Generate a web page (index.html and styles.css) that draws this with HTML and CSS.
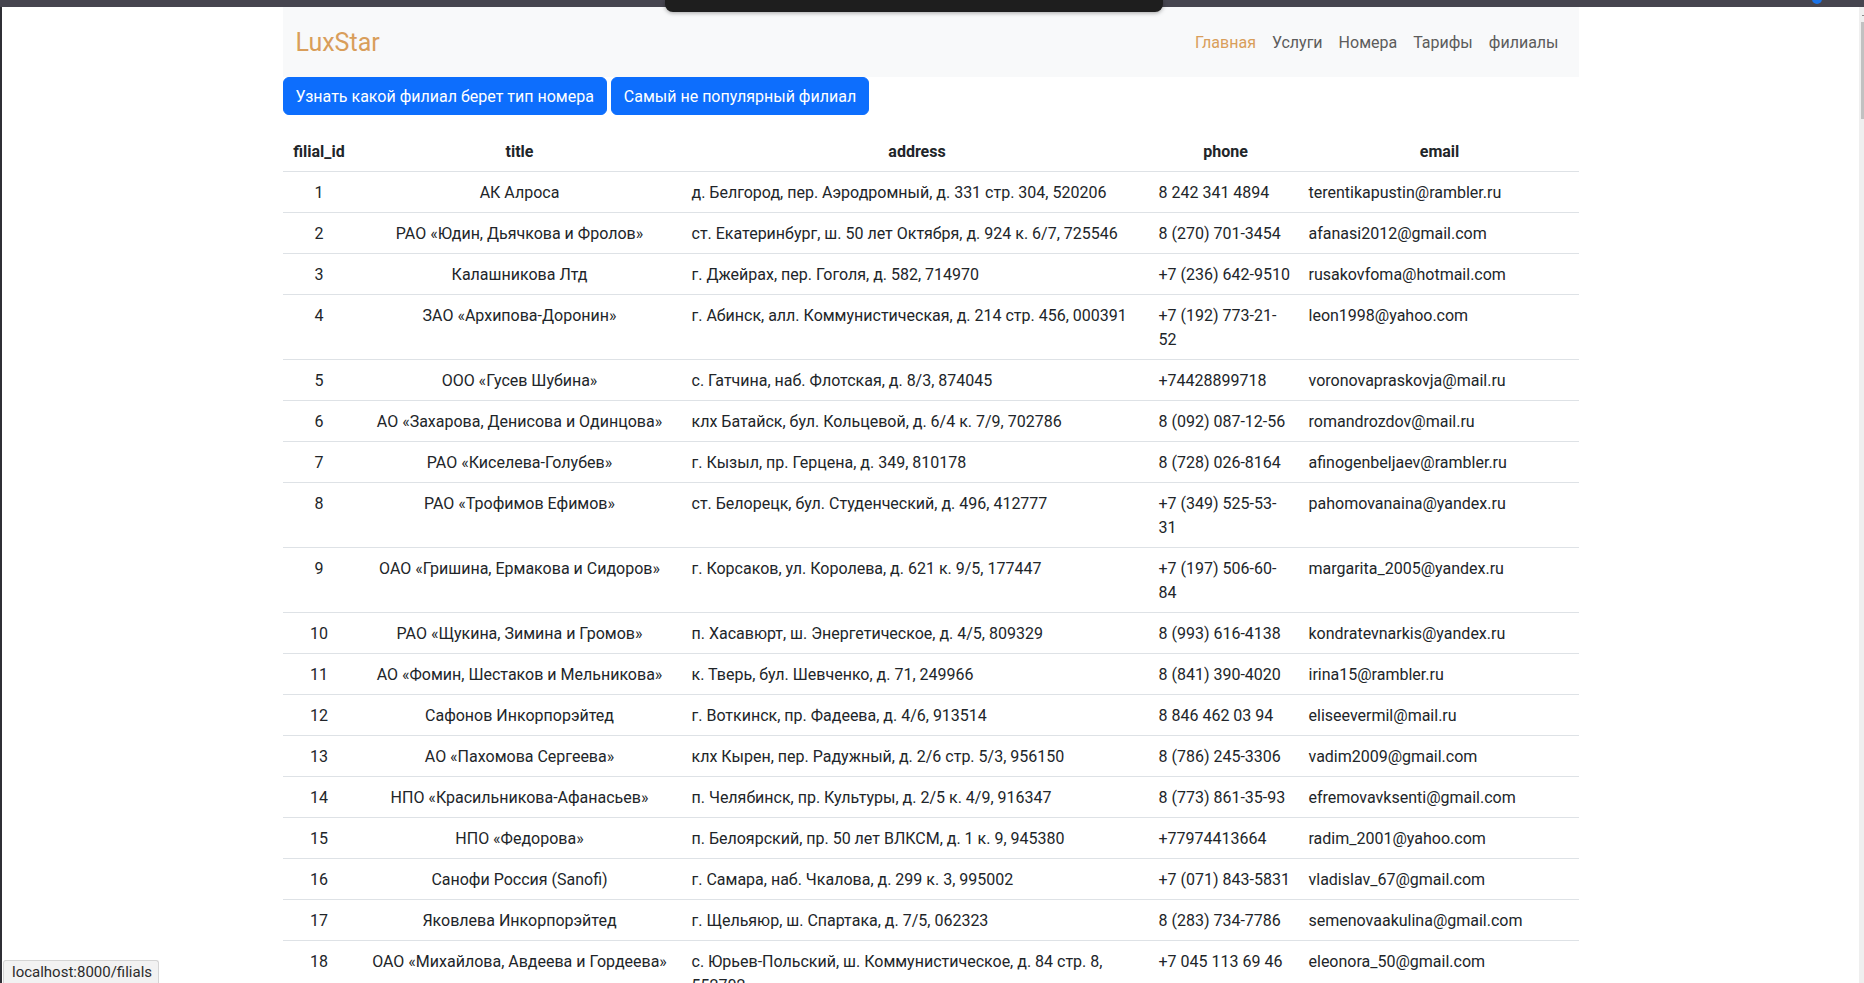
FILE: index.html
```html
<!DOCTYPE html>
<html lang="ru">
<head>
<meta charset="utf-8">
<title>LuxStar — филиалы</title>
<link rel="stylesheet" href="styles.css">
</head>
<body>
<div class="topbar">
  <div class="topbar-pill"></div>
  <div class="topbar-dot"></div>
</div>
<div class="viewport">
  <div class="edge"></div>
  <div class="page">
    <div class="container">
      <nav class="navbar">
        <a class="brand" href="#">LuxStar</a>
        <ul class="nav">
          <li><a class="nav-link active" href="#">Главная</a></li>
          <li><a class="nav-link" href="#">Услуги</a></li>
          <li><a class="nav-link" href="#">Номера</a></li>
          <li><a class="nav-link" href="#">Тарифы</a></li>
          <li><a class="nav-link" href="#">филиалы</a></li>
        </ul>
      </nav>
      <div class="actions">
        <button class="btn">Узнать какой филиал берет тип номера</button>
        <button class="btn">Самый не популярный филиал</button>
      </div>
      <table class="table">
        <colgroup>
          <col class="c-id">
          <col class="c-title">
          <col class="c-address">
          <col class="c-phone">
          <col class="c-email">
        </colgroup>
        <thead>
          <tr><th>filial_id</th><th>title</th><th>address</th><th>phone</th><th>email</th></tr>
        </thead>
        <tbody>
          <tr><td class="center">1</td><td class="center">АК Алроса</td><td>д. Белгород, пер. Аэродромный, д. 331 стр. 304, 520206</td><td>8 242 341 4894</td><td>terentikapustin@rambler.ru</td></tr>
          <tr><td class="center">2</td><td class="center">РАО «Юдин, Дьячкова и Фролов»</td><td>ст. Екатеринбург, ш. 50 лет Октября, д. 924 к. 6/7, 725546</td><td>8 (270) 701-3454</td><td>afanasi2012@gmail.com</td></tr>
          <tr><td class="center">3</td><td class="center">Калашникова Лтд</td><td>г. Джейрах, пер. Гоголя, д. 582, 714970</td><td>+7 (236) 642-9510</td><td>rusakovfoma@hotmail.com</td></tr>
          <tr><td class="center">4</td><td class="center">ЗАО «Архипова-Доронин»</td><td>г. Абинск, алл. Коммунистическая, д. 214 стр. 456, 000391</td><td>+7 (192) 773-21-52</td><td>leon1998@yahoo.com</td></tr>
          <tr><td class="center">5</td><td class="center">ООО «Гусев Шубина»</td><td>с. Гатчина, наб. Флотская, д. 8/3, 874045</td><td>+74428899718</td><td>voronovapraskovja@mail.ru</td></tr>
          <tr><td class="center">6</td><td class="center">АО «Захарова, Денисова и Одинцова»</td><td>клх Батайск, бул. Кольцевой, д. 6/4 к. 7/9, 702786</td><td>8 (092) 087-12-56</td><td>romandrozdov@mail.ru</td></tr>
          <tr><td class="center">7</td><td class="center">РАО «Киселева-Голубев»</td><td>г. Кызыл, пр. Герцена, д. 349, 810178</td><td>8 (728) 026-8164</td><td>afinogenbeljaev@rambler.ru</td></tr>
          <tr><td class="center">8</td><td class="center">РАО «Трофимов Ефимов»</td><td>ст. Белорецк, бул. Студенческий, д. 496, 412777</td><td>+7 (349) 525-53-31</td><td>pahomovanaina@yandex.ru</td></tr>
          <tr><td class="center">9</td><td class="center">ОАО «Гришина, Ермакова и Сидоров»</td><td>г. Корсаков, ул. Королева, д. 621 к. 9/5, 177447</td><td>+7 (197) 506-60-84</td><td>margarita_2005@yandex.ru</td></tr>
          <tr><td class="center">10</td><td class="center">РАО «Щукина, Зимина и Громов»</td><td>п. Хасавюрт, ш. Энергетическое, д. 4/5, 809329</td><td>8 (993) 616-4138</td><td>kondratevnarkis@yandex.ru</td></tr>
          <tr><td class="center">11</td><td class="center">АО «Фомин, Шестаков и Мельникова»</td><td>к. Тверь, бул. Шевченко, д. 71, 249966</td><td>8 (841) 390-4020</td><td>irina15@rambler.ru</td></tr>
          <tr><td class="center">12</td><td class="center">Сафонов Инкорпорэйтед</td><td>г. Воткинск, пр. Фадеева, д. 4/6, 913514</td><td>8 846 462 03 94</td><td>eliseevermil@mail.ru</td></tr>
          <tr><td class="center">13</td><td class="center">АО «Пахомова Сергеева»</td><td>клх Кырен, пер. Радужный, д. 2/6 стр. 5/3, 956150</td><td>8 (786) 245-3306</td><td>vadim2009@gmail.com</td></tr>
          <tr><td class="center">14</td><td class="center">НПО «Красильникова-Афанасьев»</td><td>п. Челябинск, пр. Культуры, д. 2/5 к. 4/9, 916347</td><td>8 (773) 861-35-93</td><td>efremovavksenti@gmail.com</td></tr>
          <tr><td class="center">15</td><td class="center">НПО «Федорова»</td><td>п. Белоярский, пр. 50 лет ВЛКСМ, д. 1 к. 9, 945380</td><td>+77974413664</td><td>radim_2001@yahoo.com</td></tr>
          <tr><td class="center">16</td><td class="center">Санофи Россия (Sanofi)</td><td>г. Самара, наб. Чкалова, д. 299 к. 3, 995002</td><td>+7 (071) 843-5831</td><td>vladislav_67@gmail.com</td></tr>
          <tr><td class="center">17</td><td class="center">Яковлева Инкорпорэйтед</td><td>г. Щельяюр, ш. Спартака, д. 7/5, 062323</td><td>8 (283) 734-7786</td><td>semenovaakulina@gmail.com</td></tr>
          <tr><td class="center">18</td><td class="center">ОАО «Михайлова, Авдеева и Гордеева»</td><td>с. Юрьев-Польский, ш. Коммунистическое, д. 84 стр. 8, 552702</td><td>+7 045 113 69 46</td><td>eleonora_50@gmail.com</td></tr>
        </tbody>
      </table>
    </div>
  </div>
  <div class="scrollbar">
    <div class="scroll-arrow"></div>
    <div class="scroll-thumb"></div>
  </div>
</div>
<div class="status">localhost:8000/filials</div>
</body>
</html>
```

FILE: styles.css
```css
html, body {
  margin: 0;
  height: 100%;
  overflow: hidden;
}

body {
  display: flex;
  flex-direction: column;
  font-family: Roboto, "Noto Sans", "Liberation Sans", sans-serif;
  font-size: 16px;
  line-height: 24px;
  color: #212529;
  background: #ffffff;
}

.topbar {
  position: relative;
  height: 7px;
  flex: 0 0 7px;
  background: #46454f;
}

.topbar-pill {
  position: absolute;
  left: 665px;
  top: 0;
  width: 498px;
  height: 12px;
  background: #1e1e1e;
  border-radius: 0 0 8px 8px;
  box-shadow: 0 1px 4px rgba(0, 0, 0, 0.35);
  z-index: 3;
}

.topbar-dot {
  position: absolute;
  left: 1812px;
  top: -6px;
  width: 10px;
  height: 10px;
  border-radius: 50%;
  background: #1a73e8;
}

.viewport {
  flex: 1;
  display: flex;
  min-height: 0;
}

.edge {
  width: 2px;
  flex: 0 0 2px;
  background: #2f2f35;
}

.page {
  flex: 1;
  min-width: 0;
  overflow: hidden;
  background: #ffffff;
}

.scrollbar {
  width: 5px;
  flex: 0 0 5px;
  background: #efefef;
  display: flex;
  flex-direction: column;
  align-items: flex-end;
}

.scroll-arrow {
  width: 2px;
  height: 1px;
  margin-top: 8px;
  background: #8a8a8a;
}

.scroll-thumb {
  width: 3px;
  height: 97px;
  margin-top: 6px;
  background: #c1c1c1;
}

.container {
  width: 1296px;
  margin: 0 auto;
}

.navbar {
  height: 70px;
  background: #f8f9fa;
  display: flex;
  align-items: center;
  justify-content: space-between;
  padding: 0 12px 0 13px;
}

.brand {
  font-size: 25px;
  line-height: 30px;
  padding-top: 1px;
  color: #d99e5b;
  text-decoration: none;
}

.nav {
  display: flex;
  list-style: none;
  margin: 0;
  padding: 0;
}

.nav-link {
  display: block;
  padding: 9px 8px 7px;
  color: #5c5c5c;
  text-decoration: none;
}

.nav-link.active {
  color: #d99e5b;
}

.actions {
  display: flex;
  gap: 4px;
  margin-bottom: 16px;
}

.btn {
  font-family: inherit;
  font-size: 16px;
  line-height: 24px;
  padding: 7px 12px 5px;
  border: 1px solid #0d6efd;
  border-radius: 6px;
  background: #0d6efd;
  color: #ffffff;
  cursor: pointer;
}

.table {
  width: 1296px;
  table-layout: fixed;
  border-collapse: collapse;
  vertical-align: top;
}

.c-id { width: 73px; }
.c-title { width: 328px; }
.c-address { width: 467px; }
.c-phone { width: 150px; }
.c-email { width: 278px; }

.table th,
.table td {
  padding: 9px 8px 7px;
  border-bottom: 1px solid #dee2e6;
  vertical-align: top;
}

.table th {
  font-weight: 700;
  text-align: center;
  vertical-align: bottom;
}

.table td {
  text-align: left;
}

.table td.center {
  text-align: center;
}

.status {
  position: fixed;
  left: 3px;
  bottom: 0;
  padding: 1px 6px 0 8px;
  font-size: 15px;
  line-height: 21px;
  color: #2b2b2b;
  background: #f2f2f2;
  border: 1px solid #d4d4d4;
  border-bottom: none;
  border-radius: 3px 3px 0 0;
  z-index: 5;
}
```
